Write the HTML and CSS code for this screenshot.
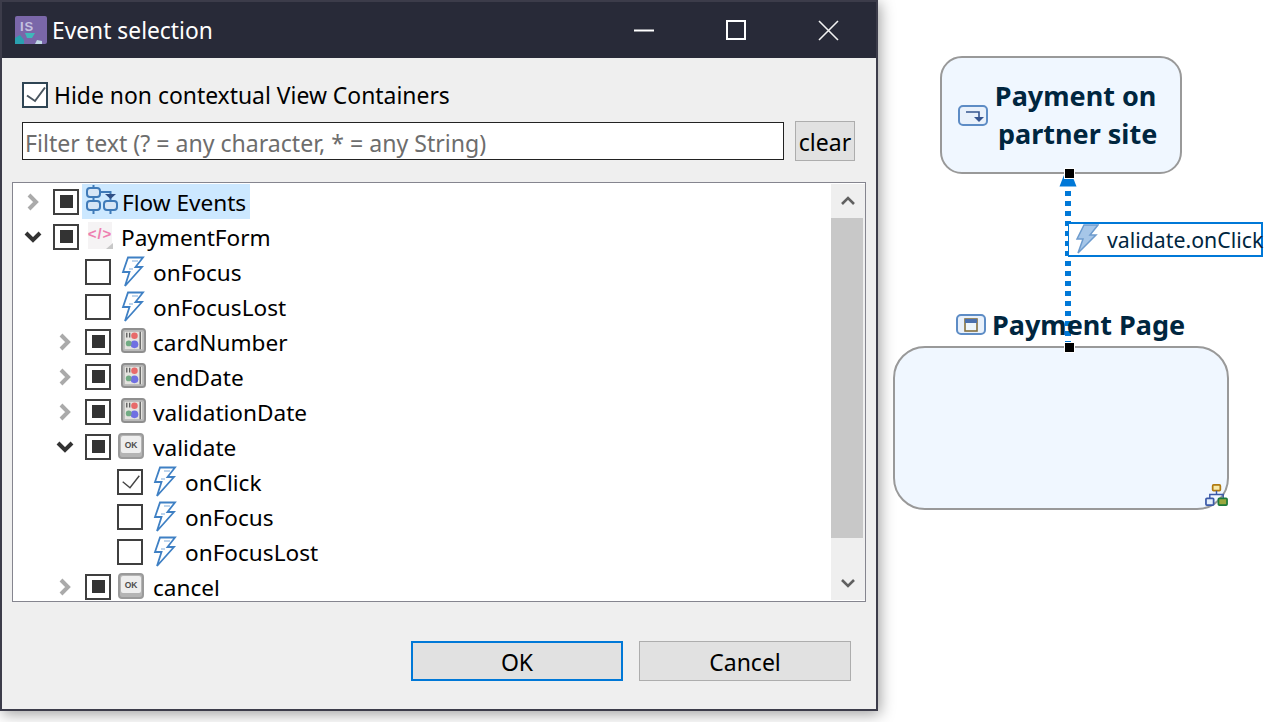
FILE: index.html
```html
<!DOCTYPE html>
<html lang="en">
<head>
<meta charset="utf-8">
<title>Event selection</title>
<link rel="stylesheet" href="styles.css">
</head>
<body>
<svg class="defs" width="0" height="0" aria-hidden="true">
  <symbol id="bolt" viewBox="0 0 28 32">
    <path d="M8 1.5H23L15.5 11H22L5 30L9.5 16H3Z" fill="#fff" stroke="#3f80c4" stroke-width="1.8" stroke-linejoin="miter"/>
    <path d="M12 5H18M9 13H13" stroke="#a9c8e8" stroke-width="1.5"/>
  </symbol>
  <symbol id="ctl" viewBox="0 0 26 26">
    <rect x="1" y="1" width="24" height="24" rx="3" fill="#b8b8b8" stroke="#8f8f8f" stroke-width="2"/>
    <rect x="4" y="4" width="18" height="18" fill="#e4e3df"/>
    <circle cx="14" cy="8" r="3.4" fill="#e86a6a"/>
    <circle cx="14" cy="17" r="4" fill="#7070e2"/>
    <circle cx="8" cy="16" r="3" fill="#72ab84"/>
    <path d="M6 5V10M9 5V10M20 4V22" stroke="#5f5f5f" stroke-width="1.4"/>
  </symbol>
  <symbol id="okb" viewBox="0 0 26 26">
    <rect x="1" y="1" width="24" height="24" rx="3" fill="#b4b4b4" stroke="#9a9a9a" stroke-width="2"/>
    <rect x="3" y="3" width="20" height="17" rx="2" fill="#eeeeee"/>
  </symbol>
</svg>

<main class="page">
  <section class="dialog">
    <header class="titlebar">
      <svg class="appicon" viewBox="0 0 32 28">
        <rect width="32" height="28" rx="2" fill="#7a67a9"/>
        <text x="5" y="15" class="istxt">IS</text>
        <path d="M0 28V22L5 19L9 24V28Z" fill="#2aa0b0"/>
        <path d="M10 17H20L17 22H12Z" fill="#3fb9ba"/>
        <path d="M20 28L22 24L27 25V28Z" fill="#bfd8e4"/>
      </svg>
      <h1 class="title">Event selection</h1>
      <div class="winctl">
        <svg class="wbtn" viewBox="0 0 21 21"><path d="M0 10.500H20" stroke="#fff" stroke-width="2"/></svg>
        <svg class="wbtn" viewBox="0 0 21 21"><rect x="1" y="1" width="18" height="18" fill="none" stroke="#fff" stroke-width="2"/></svg>
        <svg class="wbtn" viewBox="0 0 21 21"><path d="M1 1L20 20M20 1L1 20" stroke="#f2f2f2" stroke-width="1.600"/></svg>
      </div>
    </header>

    <div class="body">
      <label class="hide-row">
        <span class="check check-main"><svg viewBox="0 0 22 22"><path d="M3 11.500L11 17L21 3.500" fill="none" stroke="#4a5660" stroke-width="2"/></svg></span>
        <span class="hide-label">Hide non contextual View Containers</span>
      </label>

      <div class="filter-row">
        <div class="filter">Filter text (? = any character, * = any String)</div>
        <button class="btn-clear">clear</button>
      </div>

      <div class="tree">
        <div class="rows">
          <div class="row l0">
            <svg class="tw closed" viewBox="0 0 16 18"><path d="M4 2L11 9L4 16"/></svg>
            <span class="check part"></span>
            <span class="sel">
              <svg class="ico-flow" viewBox="0 0 34 30">
                <g fill="#d7e6f6" stroke="#3f7ab8" stroke-width="2">
                  <rect x="2" y="3" width="13" height="9" rx="3"/>
                  <rect x="2" y="16" width="13" height="9" rx="3"/>
                  <rect x="19" y="16" width="13" height="9" rx="3"/>
                </g>
                <path d="M8.500 0V3M8.500 12V16M8.500 25V29M25.500 25V29M15 7H25.500V16" fill="none" stroke="#3f7ab8" stroke-width="2"/>
                <path d="M20 9H31L25.500 14Z" fill="#2f4f86"/>
              </svg>
              <span class="flow-label">Flow Events</span>
            </span>
          </div>
          <div class="row l0">
            <svg class="tw open" viewBox="0 0 18 16"><path d="M2 4L9 11L16 4"/></svg>
            <span class="check part"></span>
            <svg class="ico" viewBox="0 0 36 32">
              <rect x="6" y="1" width="24" height="27" fill="#f5f3f4"/>
              <text x="18" y="18" class="pinktxt">&lt;/&gt;</text>
              <path d="M24 28L31 22V28Z" fill="#c8c8c8"/>
            </svg>
            <span class="lbl">PaymentForm</span>
          </div>
          <div class="row l1">
            <span class="tw"></span><span class="check"></span>
            <svg class="ico"><use href="#bolt" x="2"/></svg><span class="lbl">onFocus</span>
          </div>
          <div class="row l1">
            <span class="tw"></span><span class="check"></span>
            <svg class="ico"><use href="#bolt" x="2"/></svg><span class="lbl">onFocusLost</span>
          </div>
          <div class="row l1">
            <svg class="tw closed" viewBox="0 0 16 18"><path d="M4 2L11 9L4 16"/></svg><span class="check part"></span>
            <svg class="ico"><use href="#ctl" x="7" y="2" width="25" height="25"/></svg><span class="lbl">cardNumber</span>
          </div>
          <div class="row l1">
            <svg class="tw closed" viewBox="0 0 16 18"><path d="M4 2L11 9L4 16"/></svg><span class="check part"></span>
            <svg class="ico"><use href="#ctl" x="7" y="2" width="25" height="25"/></svg><span class="lbl">endDate</span>
          </div>
          <div class="row l1">
            <svg class="tw closed" viewBox="0 0 16 18"><path d="M4 2L11 9L4 16"/></svg><span class="check part"></span>
            <svg class="ico"><use href="#ctl" x="7" y="2" width="25" height="25"/></svg><span class="lbl">validationDate</span>
          </div>
          <div class="row l1">
            <svg class="tw open" viewBox="0 0 18 16"><path d="M2 4L9 11L16 4"/></svg><span class="check part"></span>
            <svg class="ico"><use href="#okb" x="4" y="2" width="26" height="26"/><text x="17" y="17" class="oktxt">OK</text></svg><span class="lbl">validate</span>
          </div>
          <div class="row l2">
            <span class="tw"></span>
            <span class="check"><svg viewBox="0 0 22 22"><path d="M3.700 10.700L11 16.700L20.300 4.700" fill="none" stroke="#444" stroke-width="1.400"/></svg></span>
            <svg class="ico"><use href="#bolt" x="2"/></svg><span class="lbl">onClick</span>
          </div>
          <div class="row l2">
            <span class="tw"></span><span class="check"></span>
            <svg class="ico"><use href="#bolt" x="2"/></svg><span class="lbl">onFocus</span>
          </div>
          <div class="row l2">
            <span class="tw"></span><span class="check"></span>
            <svg class="ico"><use href="#bolt" x="2"/></svg><span class="lbl">onFocusLost</span>
          </div>
          <div class="row l1">
            <svg class="tw closed" viewBox="0 0 16 18"><path d="M4 2L11 9L4 16"/></svg><span class="check part"></span>
            <svg class="ico"><use href="#okb" x="4" y="2" width="26" height="26"/><text x="17" y="17" class="oktxt">OK</text></svg><span class="lbl">cancel</span>
          </div>
        </div>
        <div class="scrollbar">
          <div class="sb-arrow"><svg viewBox="0 0 14 10"><path d="M1 8L7 2L13 8"/></svg></div>
          <div class="sb-track"><div class="sb-thumb"></div></div>
          <div class="sb-arrow"><svg viewBox="0 0 14 10"><path d="M1 2L7 8L13 2"/></svg></div>
        </div>
      </div>

      <div class="actions">
        <button class="btn btn-default">OK</button>
        <button class="btn">Cancel</button>
      </div>
    </div>
  </section>

  <section class="canvas">
    <div class="node node-a">
      <svg class="node-ico node-ico-a" viewBox="0 0 30 21">
        <rect x="1" y="1" width="28" height="19" rx="4" fill="#e9f1fb" stroke="#5d8cc5" stroke-width="2"/>
        <path d="M8 7H21V13" fill="none" stroke="#36558f" stroke-width="1.600"/>
        <path d="M16 12H26L21 17Z" fill="#36558f"/>
      </svg>
      <div class="node-title">Payment on<br><span class="line-two">partner site</span></div>
    </div>
    <div class="edge"></div>
    <svg class="arrowhead" viewBox="0 0 18 12"><path d="M5 0H13L17.500 11.500H0.500Z" fill="#0078d7"/></svg>
    <span class="handle h-a"></span>
    <div class="edge-label">
      <svg class="edge-bolt" viewBox="0 0 24 30">
        <path d="M9 1H23L15 11H21L3 29L8 15H2Z" fill="#a6c6e8" stroke="#6d9bcd" stroke-width="1.500"/>
      </svg>
      <span>validate.onClick</span>
    </div>
    <div class="page-title">
      <svg class="node-ico" viewBox="0 0 30 21">
        <rect x="1" y="1" width="28" height="19" rx="4" fill="#e9f1fb" stroke="#5d8cc5" stroke-width="2"/>
        <rect x="9" y="5" width="12" height="12" fill="#eef6fb" stroke="#84703f" stroke-width="1.600"/>
        <rect x="9" y="5" width="12" height="4" fill="#4b70ad"/>
      </svg>
      <span>Payment Page</span>
    </div>
    <div class="node node-b">
      <svg class="hier" viewBox="0 0 24 24">
        <rect x="8" y="1" width="8" height="6" rx="1" fill="#f7e9a8" stroke="#b07a10" stroke-width="1.800"/>
        <path d="M12 7V11M5 15V11H19V15" fill="none" stroke="#3c5aa8" stroke-width="1.500"/>
        <rect x="1" y="15" width="8" height="7" rx="1" fill="#e6f0fb" stroke="#3c5aa8" stroke-width="1.800"/>
        <rect x="14" y="15" width="9" height="7" rx="1" fill="#9aa83e" stroke="#1d7a3a" stroke-width="1.800"/>
      </svg>
    </div>
    <span class="handle h-b"></span>
  </section>
</main>
</body>
</html>
```

FILE: styles.css
```css
* { box-sizing: border-box; }
html, body { margin: 0; height: 722px; overflow: hidden; background: #fff; }
body { font-family: "Noto Sans", "Open Sans", sans-serif; font-size: 23px; color: #000; }
.defs { position: absolute; }
.page { display: flex; height: 722px; }

.dialog {
  flex: 0 0 878px; height: 711px; display: flex; flex-direction: column;
  border: 2px solid #3c3c4a; background: #efefef;
  box-shadow: 2px 3px 14px rgba(0, 0, 0, .38);
}
.titlebar { flex: 0 0 56px; background: #282a38; display: flex; align-items: center; padding-left: 13px; }
.appicon { width: 32px; height: 28px; margin-right: 5px; }
.istxt { font: bold 13px "Liberation Sans", sans-serif; fill: #c4c1e0; letter-spacing: 1px; }
.title { margin: 0; font-size: 22.8px; font-weight: 400; color: #fff; }
.winctl { margin-left: auto; display: flex; margin-right: 37px; gap: 71px; }
.wbtn { width: 21px; height: 21px; display: block; }

.body { flex: 1; display: flex; flex-direction: column; padding: 0 10px; min-height: 0; }
.hide-row { display: flex; align-items: center; gap: 6px; height: 26px; margin-top: 24px; margin-left: 10px; }
.hide-label { padding-top: 1px; font-size: 22.9px; }
.check { flex: 0 0 26px; width: 26px; height: 26px; border: 2px solid #3f3f3f; background: #fff; display: flex; align-items: center; justify-content: center; }
.check svg { width: 100%; height: 100%; display: block; }
.check-main { border-color: #2f4554; }
.part::after { content: ""; width: 13px; height: 13px; background: #333; }

.filter-row { display: flex; align-items: center; margin: 13px 11px 0 10px; gap: 11px; }
.filter { flex: 1; height: 38px; line-height: 40px; padding-left: 2px; border: 1px solid #222; background: #fff; color: #6d6d6d; white-space: nowrap; font-size: 23.1px; }
.btn-clear, .btn { font: inherit; color: #000; background: #e1e1e1; border: 1px solid #adadad; padding: 2px 0 0; }
.btn-clear { width: 60px; height: 40px; }

.tree { margin-top: 21px; height: 420px; border: 1px solid #85858f; background: #fff; display: flex; overflow: hidden; }
.rows { flex: 1; padding-top: 1px; min-width: 0; font-size: 22.6px; }
.row { height: 35px; display: flex; align-items: center; }
.l0 { padding-left: 0; }
.l1 { padding-left: 32px; }
.l2 { padding-left: 64px; }
.tw { flex: 0 0 40px; height: 18px; fill: none; stroke-width: 4; }
.closed { stroke: #aaa; padding-left: 12px; padding-right: 12px; }
.open { stroke: #333; padding-left: 11px; padding-right: 11px; }
.ico { flex: 0 0 36px; width: 36px; height: 32px; margin-left: 3px; }
.lbl { margin-left: 3px; padding-top: 2px; white-space: nowrap; }
.sel { display: flex; align-items: center; margin-left: 3px; height: 35px; width: 168px; background: #cce8ff; }
.ico-flow { width: 34px; height: 30px; margin: 0 0 4px 3px; }
.flow-label { margin-left: 3px; padding-top: 2px; white-space: nowrap; }
.pinktxt { font: bold 15px "Liberation Sans", sans-serif; fill: #ee7fb0; text-anchor: middle; letter-spacing: 1px; }
.oktxt { font: bold 8.5px "Liberation Sans", sans-serif; fill: #4d4d4d; text-anchor: middle; }

.scrollbar { flex: 0 0 34px; background: #efefef; margin: 1px 0; display: flex; flex-direction: column; }
.sb-arrow { flex: 0 0 34px; display: flex; align-items: center; justify-content: center; }
.sb-arrow svg { width: 14px; height: 10px; fill: none; stroke: #606060; stroke-width: 2.6; }
.sb-track { flex: 1; }
.sb-thumb { width: 32px; height: 320px; background: #c8c8c8; }

.actions { display: flex; justify-content: flex-end; gap: 16px; margin-top: 39px; padding-right: 15px; }
.btn { width: 212px; height: 40px; }
.btn-default { border: 2px solid #0078d7; }

.canvas { position: relative; flex: 1; height: 722px; }
.node { position: absolute; background: #f0f7ff; border: 2.5px solid #999; }
.node-a { left: 62px; top: 56px; width: 242px; height: 118px; border-radius: 22px; display: flex; align-items: center; padding-left: 16px; }
.node-b { left: 15px; top: 346px; width: 336px; height: 164px; border-radius: 32px; }
.node-ico { width: 30px; height: 21px; flex: none; }
.node-ico-a { margin-right: 6px; }
.node-title { font-size: 27px; font-weight: 700; color: #00263f; line-height: 38px; text-align: center; white-space: nowrap; padding-bottom: 1px; }
.line-two { margin-left: 4px; }
.page-title { position: absolute; left: 78px; top: 306px; display: flex; align-items: center; gap: 6px; font-size: 27px; line-height: 37px; font-weight: 700; color: #00263f; white-space: nowrap; }
.edge { position: absolute; left: 187px; top: 191px; height: 151px; width: 6px; background: repeating-linear-gradient(to bottom, #0078d7 0 5px, transparent 5px 10px); }
.arrowhead { position: absolute; left: 181px; top: 175px; width: 18px; height: 12px; }
.handle { position: absolute; width: 11px; height: 11px; background: #000; border: 1px solid #fff; }
.h-a { left: 186px; top: 168px; }
.h-b { left: 186px; top: 342px; }
.edge-label { position: absolute; left: 190px; top: 222px; width: 195px; height: 35px; border: 2px solid #0078d7; border-left-width: 1px; background: #fff; display: flex; align-items: center; padding: 0 0 1px 6px; gap: 8px; font-size: 21.3px; color: #00263f; white-space: nowrap; }
.edge-bolt { width: 24px; height: 30px; flex: none; }
.hier { position: absolute; right: -1px; bottom: 1px; width: 23px; height: 23px; }
```
